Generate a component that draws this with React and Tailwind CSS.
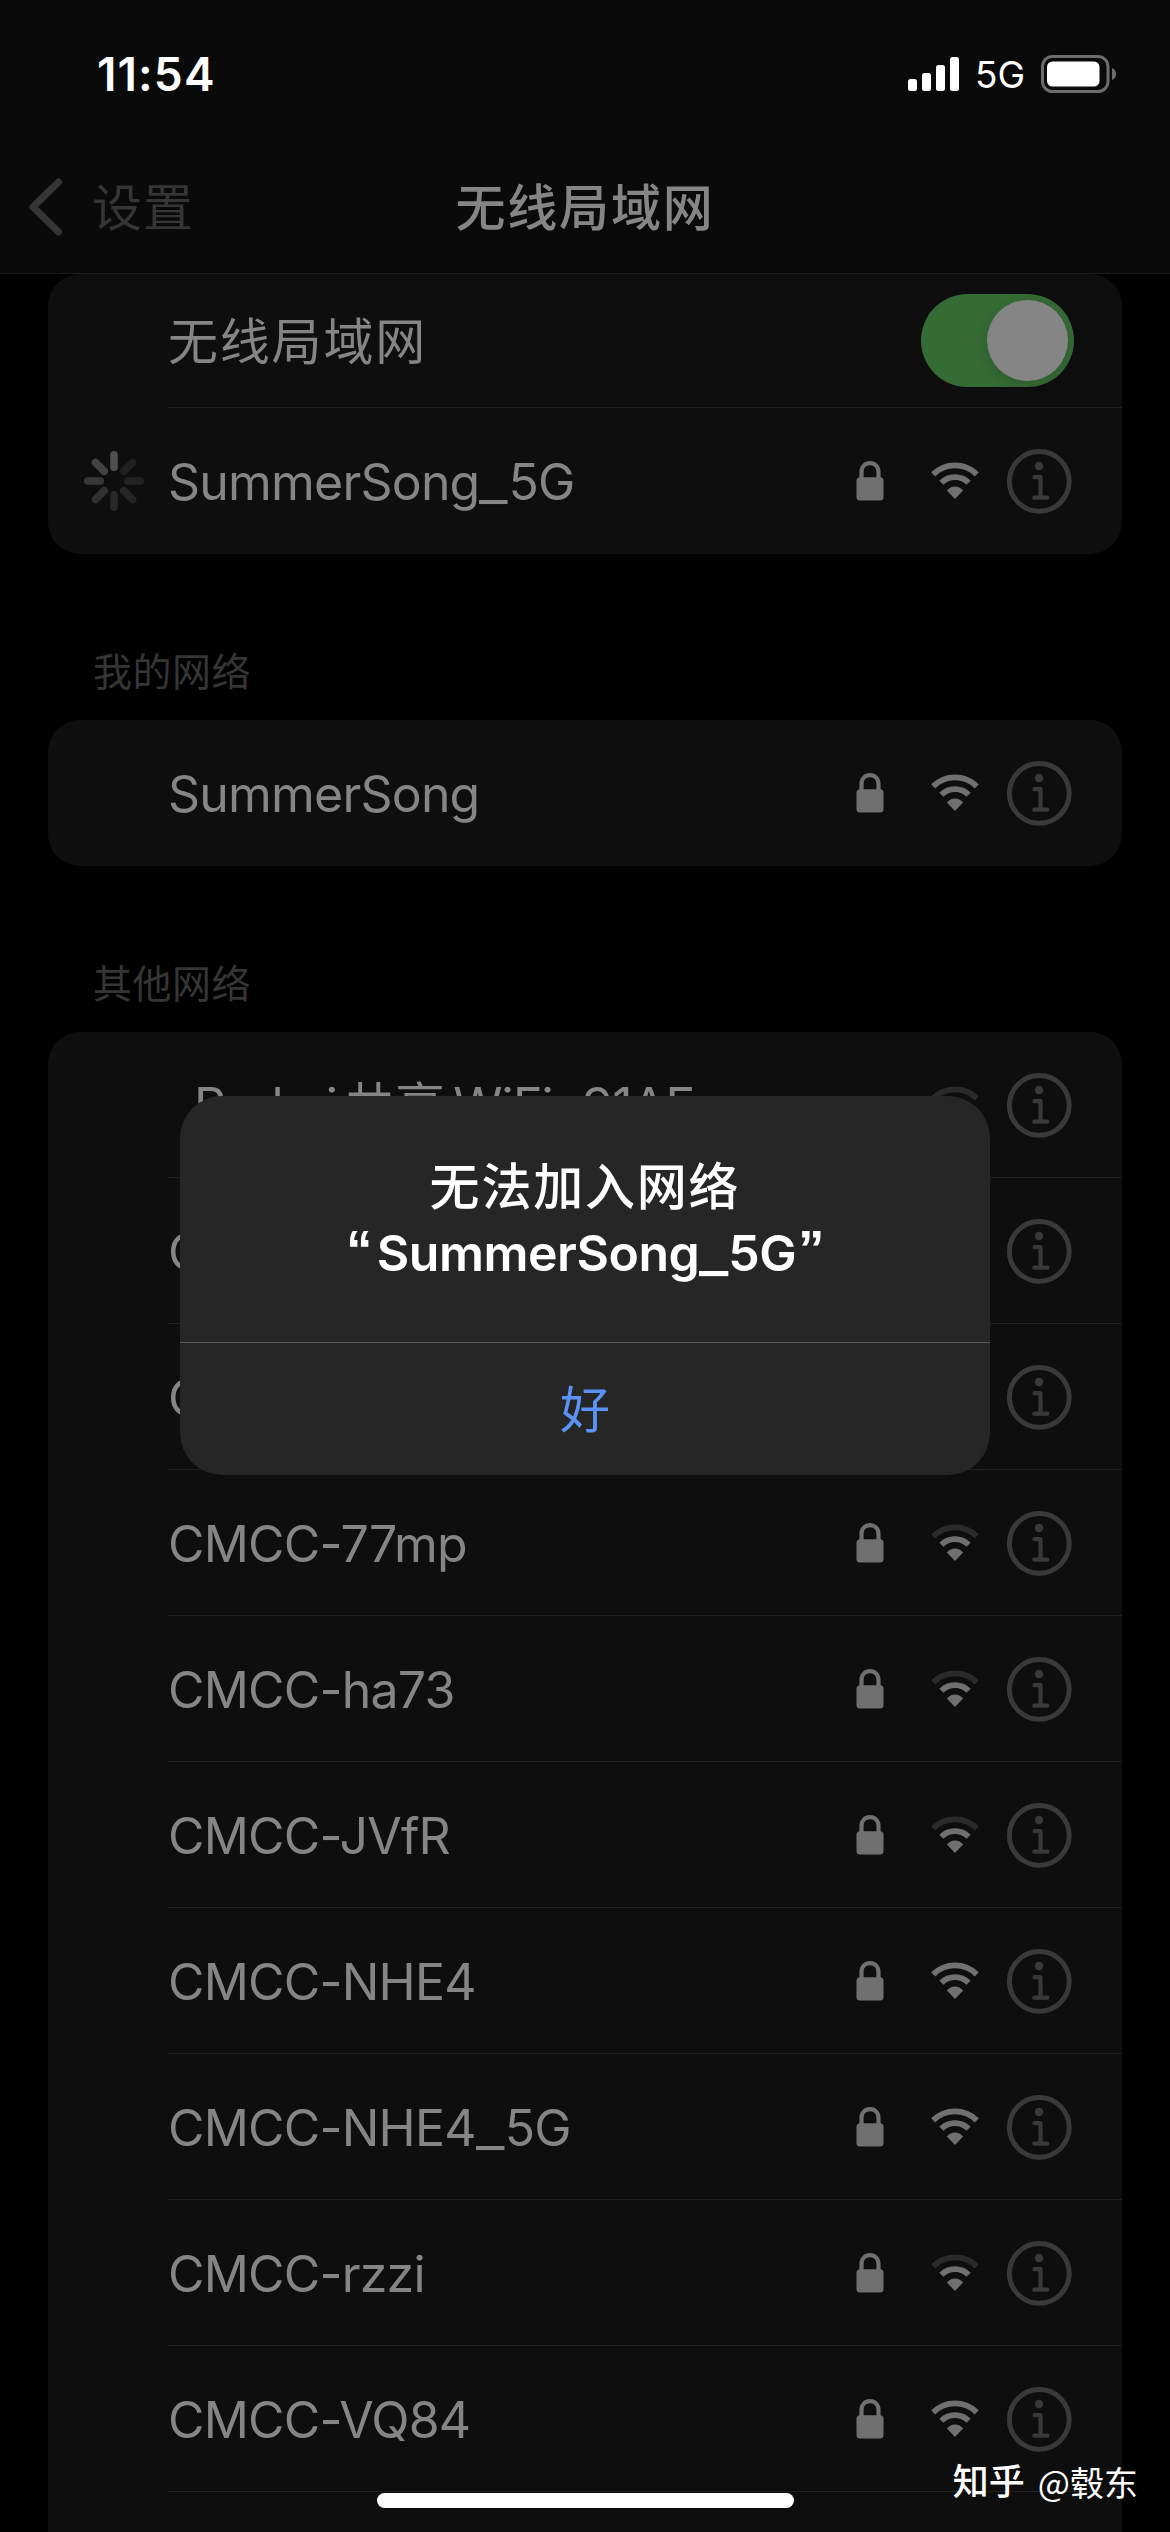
import React from 'react';

const otherNetworks = [
  { name: 'Redmi共享WiFi_91AF', weak: true, open: true, indent: true },
  { name: 'CMCC' },
  { name: 'CMCC' },
  { name: 'CMCC-77mp', weak: true },
  { name: 'CMCC-ha73', weak: true },
  { name: 'CMCC-JVfR', weak: true },
  { name: 'CMCC-NHE4' },
  { name: 'CMCC-NHE4_5G' },
  { name: 'CMCC-rzzi', weak: true },
  { name: 'CMCC-VQ84' },
];

const LockIcon = () => (
  <svg width="28" height="40" viewBox="0 0 28 40" fill="none">
    <path d="M5.500 17V11C5.500 5.800 9 2.200 14 2.200s8.500 3.600 8.500 8.800v6" stroke="#707070" strokeWidth="4.200" />
    <rect x="0.500" y="16.200" width="27" height="23.300" rx="3.500" fill="#707070" />
  </svg>
);

const WifiIcon = ({ weak }) => (
  <svg width="48" height="38" viewBox="0 0 48 38" fill="none">
    <path
      d="M2.200 12.400a31 31 0 0 1 43.600 0"
      stroke={weak ? '#2a2a2a' : '#707070'}
      strokeWidth="5.800"
    />
    <path d="M10.400 20.700a19.400 19.400 0 0 1 27.200 0" stroke="#707070" strokeWidth="5.800" />
    <path d="M24 37 15.900 28.500Q19.300 24.500 24 24.500T32.100 28.500Z" fill="#707070" />
  </svg>
);

const InfoIcon = () => (
  <svg width="66" height="66" viewBox="0 0 66 66" fill="none" stroke="#393939">
    <circle cx="33.300" cy="33.300" r="29.900" strokeWidth="5" />
    <circle cx="33" cy="18" r="4.200" fill="#393939" stroke="none" />
    <path
      d="M28.500 29.200h6v20.500M28.300 49.700h13"
      strokeWidth="4.200"
      strokeLinecap="round"
      strokeLinejoin="round"
    />
  </svg>
);

const spokes = ['#505050', '#202020', '#222222', '#252525', '#282828', '#303030', '#383838', '#424242'];

const Spinner = () => (
  <svg width="60" height="60" viewBox="-30 -30 60 60">
    {spokes.map((color, i) => (
      <rect
        key={i}
        x="-3.800"
        y="-30"
        width="7.600"
        height="20"
        rx="3.800"
        fill={color}
        transform={`rotate(${i * 45})`}
      />
    ))}
  </svg>
);

// widens the underscore and gives Chinese characters some air inside latin names
const NetworkName = ({ name }) =>
  name.split(/(_|[\u4e00-\u9fff]+)/).map((part, i) => {
    if (part === '_') {
      return (
        <span key={i} className="inline-block w-[29px] origin-left scale-x-125">
          _
        </span>
      );
    }
    if (/[\u4e00-\u9fff]/.test(part)) {
      return (
        <span key={i} className="mx-[7px] tracking-[1px]">
          {part}
        </span>
      );
    }
    return part;
  });

const StatusBar = () => (
  <div className="flex h-[148px] items-center justify-between pl-[97px] pr-[53px] text-white">
    <span className="text-[46px] font-semibold leading-none tracking-[1.100px]">11:54</span>
    <div className="flex items-center">
      <svg width="52" height="36" viewBox="0 0 52 36" fill="white">
        <rect x="0" y="23" width="9" height="12" rx="2.500" />
        <rect x="14" y="17" width="9" height="18" rx="2.500" />
        <rect x="28" y="9" width="9" height="26" rx="2.500" />
        <rect x="42" y="1" width="9" height="34" rx="2.500" />
      </svg>
      <span className="ml-[15px] w-[66px] pt-[1px] text-[37px] leading-none">5G</span>
      <svg width="76" height="38" viewBox="0 0 76 38" fill="none">
        <rect x="1.500" y="1.500" width="65.500" height="35" rx="10" stroke="#6c6c6c" strokeWidth="3" />
        <rect x="6" y="6.500" width="52.500" height="25" rx="5.500" fill="white" />
        <path d="M71 13c5.500 2 5.500 10 0 12z" fill="#6c6c6c" />
      </svg>
    </div>
  </div>
);

const NavBar = () => (
  <div className="grid h-[125px] grid-cols-3 items-center pb-[7px]">
    <div className="flex items-center pl-[28px]">
      <svg width="36" height="60" viewBox="0 0 36 60" fill="none">
        <path
          d="M30.500 5 5 30l25.500 25"
          stroke="#353535"
          strokeWidth="7"
          strokeLinecap="round"
          strokeLinejoin="round"
        />
      </svg>
      <span className="ml-[28px] pt-[2px] text-[50px] leading-none tracking-[1px] text-[#353535]">设置</span>
    </div>
    <h1 className="whitespace-nowrap pt-[2px] text-center text-[50px] font-medium leading-none tracking-[1.800px] text-[#858585]">
      无线局域网
    </h1>
  </div>
);

const NetworkRow = ({ name, weak, open, indent, loading, last }) => (
  <div className="flex h-[146px] shrink-0">
    <div className="flex w-[120px] items-center pl-[36px]">{loading && <Spinner />}</div>
    <div
      className={`flex flex-1 items-center border-b pr-[50px] ${
        last ? 'border-transparent' : 'border-[#202020]'
      } ${indent ? 'pl-[26px]' : ''}`}
    >
      <span className="flex-1 whitespace-nowrap pt-[2px] text-[50px] leading-[60px] tracking-[-0.800px] text-[#858585]">
        <NetworkName name={name} />
      </span>
      {!open && <LockIcon />}
      <div className="ml-[47px] mr-[27px]">
        <WifiIcon weak={weak} />
      </div>
      <InfoIcon />
    </div>
  </div>
);

const SectionTitle = ({ children }) => (
  <h2 className="flex h-[166px] items-end pb-[28px] pl-[93px] text-[39px] leading-[40px] tracking-[0.500px] text-[#353535]">
    {children}
  </h2>
);

const Alert = () => (
  <div className="absolute left-[180px] top-[1096px] flex h-[379px] w-[810px] flex-col overflow-hidden rounded-[42px] bg-[#262626]">
    <div className="flex h-[247px] flex-col items-center border-b border-[#5a5a5a] pt-[58px] text-[50px] font-semibold leading-[66px] text-white">
      <p className="font-medium tracking-[1.800px]">无法加入网络</p>
      <p className="flex tracking-[-0.500px]">
        <span className="mr-[5px] font-['Liberation_Sans',sans-serif] text-[52px] leading-[58px]">“</span>
        <span>
          <NetworkName name="SummerSong_5G" />
        </span>
        <span className="ml-[2px] font-['Liberation_Sans',sans-serif] text-[52px] leading-[58px]">”</span>
      </p>
    </div>
    <button className="flex-1 pt-[2px] text-[50px] leading-none text-[#5b92f5]">好</button>
  </div>
);

const App = () => {
  return (
    <div className="relative h-[2532px] w-[1170px] overflow-hidden bg-black font-['Inter','Noto_Sans_CJK_SC',sans-serif]">
      <header className="h-[274px] border-b border-[#1c1c1c] bg-[#0a0a0a]">
        <StatusBar />
        <NavBar />
      </header>

      <section className="mx-[48px] h-[280px] rounded-[32px] bg-[#0e0e0e]">
        <div className="flex h-[134px]">
          <div className="w-[120px]" />
          <div className="flex flex-1 items-center justify-between border-b border-[#202020] pr-[48px]">
            <span className="pt-[3px] text-[50px] leading-none tracking-[1.800px] text-[#858585]">无线局域网</span>
            <div className="flex h-[93px] w-[153px] items-center justify-end rounded-full bg-[#356b35] p-[6px]">
              <div className="h-[81px] w-[81px] rounded-full bg-[#858585] shadow-[0_4px_14px_rgba(0,0,0,0.150)]" />
            </div>
          </div>
        </div>
        <NetworkRow name="SummerSong_5G" loading last />
      </section>

      <SectionTitle>我的网络</SectionTitle>
      <section className="mx-[48px] rounded-[32px] bg-[#0e0e0e]">
        <NetworkRow name="SummerSong" last />
      </section>

      <SectionTitle>其他网络</SectionTitle>
      <section className="mx-[48px] h-[1540px] rounded-t-[32px] bg-[#0e0e0e]">
        {otherNetworks.map((network, i) => (
          <NetworkRow key={i} {...network} />
        ))}
      </section>

      <Alert />

      {/* home indicator */}
      <div className="absolute bottom-[24px] left-[377px] h-[15px] w-[417px] rounded-full bg-white" />

      <div className="absolute bottom-[32px] right-[32px] flex items-center gap-[13px] whitespace-nowrap leading-[36px] text-white">
        <span className="text-[36px] font-medium">知乎</span>
        <span className="font-['Noto_Sans_CJK_SC',sans-serif] text-[34px]">@毂东</span>
      </div>
    </div>
  );
};

export default App;
